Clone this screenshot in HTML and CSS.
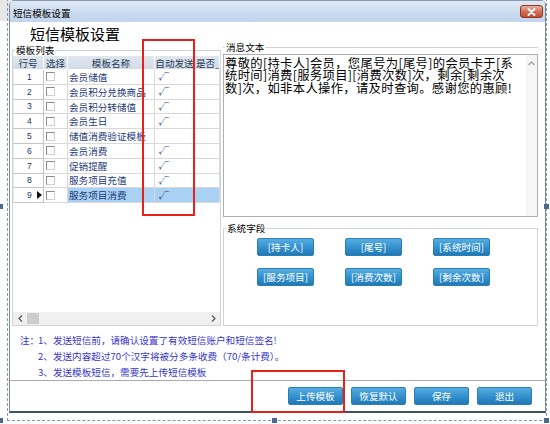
FILE: index.html
```html
<!DOCTYPE html>
<html lang="zh">
<head>
<meta charset="utf-8">
<title>短信模板设置</title>
<link rel="stylesheet" href="styles.css">
</head>
<body>
<div class="stage">
  <div class="gutter"><div class="gutter-top"></div></div>
  <div class="window">
    <div class="titlebar">
      <span class="title">短信模板设置</span>
      <div class="close">
        <svg width="9" height="8" viewBox="0 0 9 8"><path d="M1.5 1 L7.5 7 M7.5 1 L1.5 7" stroke="#fff" stroke-width="1.8" stroke-linecap="round"/></svg>
      </div>
    </div>
    <div class="client">
      <div class="big-title">短信模板设置</div>
      <div class="main">
        <div class="group list-group">
          <div class="legend"><span>模板列表</span></div>
          <div class="grid-wrap">
            <div class="grid">
              <div class="hcell">行号</div>
              <div class="hcell">选择</div>
              <div class="hcell">模板名称</div>
              <div class="hcell">自动发送</div>
              <div class="hcell clip">是否_</div>

              <div class="cell num">1</div><div class="cell chk"><i class="box"></i></div><div class="cell name">会员储值</div><div class="cell auto">√</div><div class="cell"></div>
              <div class="cell num">2</div><div class="cell chk"><i class="box"></i></div><div class="cell name">会员积分兑换商品</div><div class="cell auto">√</div><div class="cell"></div>
              <div class="cell num">3</div><div class="cell chk"><i class="box"></i></div><div class="cell name">会员积分转储值</div><div class="cell auto">√</div><div class="cell"></div>
              <div class="cell num">4</div><div class="cell chk"><i class="box"></i></div><div class="cell name">会员生日</div><div class="cell auto">√</div><div class="cell"></div>
              <div class="cell num">5</div><div class="cell chk"><i class="box"></i></div><div class="cell name">储值消费验证模板</div><div class="cell auto"></div><div class="cell"></div>
              <div class="cell num">6</div><div class="cell chk"><i class="box"></i></div><div class="cell name">会员消费</div><div class="cell auto">√</div><div class="cell"></div>
              <div class="cell num">7</div><div class="cell chk"><i class="box"></i></div><div class="cell name">促销提醒</div><div class="cell auto">√</div><div class="cell"></div>
              <div class="cell num">8</div><div class="cell chk"><i class="box"></i></div><div class="cell name">服务项目充值</div><div class="cell auto">√</div><div class="cell"></div>
              <div class="cell num">9<i class="arrow"></i></div><div class="cell chk"><i class="box"></i></div><div class="cell name sel">服务项目消费</div><div class="cell auto sel">√</div><div class="cell sel"></div>
            </div>
            <div class="hscroll">
              <span class="sarrow">
                <svg width="5" height="7" viewBox="0 0 5 7"><path d="M4 0.5 L1 3.5 L4 6.5" fill="none" stroke="#555" stroke-width="1.2"/></svg>
              </span>
              <span class="thumb"></span>
              <span class="sarrow right">
                <svg width="5" height="7" viewBox="0 0 5 7"><path d="M1 0.5 L4 3.5 L1 6.5" fill="none" stroke="#555" stroke-width="1.2"/></svg>
              </span>
            </div>
          </div>
        </div>
        <div class="right-col">
          <div class="group msg-group">
            <div class="legend"><span>消息文本</span></div>
            <div class="textarea">
              <div class="msg-text">尊敬的[持卡人]会员，您尾号为[尾号]的会员卡于[系<br>统时间]消费[服务项目][消费次数]次，剩余[剩余次<br>数]次，如非本人操作，请及时查询。感谢您的惠顾!</div>
              <div class="vscroll">
                <svg width="7" height="5" viewBox="0 0 7 5"><path d="M0.5 4 L3.5 1 L6.5 4" fill="none" stroke="#9a9a9a" stroke-width="1.1"/></svg>
              </div>
            </div>
          </div>
          <div class="group field-group">
            <div class="legend"><span>系统字段</span></div>
            <div class="field-buttons">
              <div class="btn">[持卡人]</div>
              <div class="btn">[尾号]</div>
              <div class="btn">[系统时间]</div>
              <div class="btn">[服务项目]</div>
              <div class="btn">[消费次数]</div>
              <div class="btn">[剩余次数]</div>
            </div>
          </div>
        </div>
      </div>
      <div class="notes">
        <div class="note-line"><span class="note-head">注：</span>1、发送短信前，请确认设置了有效短信账户和短信签名!</div>
        <div class="note-line indent">2、发送内容超过70个汉字将被分多条收费（70/条计费）。</div>
        <div class="note-line indent">3、发送模板短信，需要先上传短信模板</div>
      </div>
      <div class="bottom-bar">
        <div class="btn wide">上传模板</div>
        <div class="btn wide">恢复默认</div>
        <div class="btn wide">保存</div>
        <div class="btn wide">退出</div>
      </div>
    </div>
  </div>
  <div class="sel-frame"></div>
  <div class="handle h-ml"></div>
  <div class="handle h-mr"></div>
  <div class="handle h-bl"></div>
  <div class="handle h-bm"></div>
  <div class="handle h-br"></div>
  <div class="red-box red1"></div>
  <div class="red-box red2"></div>
</div>
</body>
</html>
```

FILE: styles.css
```css
html, body {
  margin: 0;
  padding: 0;
}
body {
  width: 550px;
  height: 424px;
  overflow: hidden;
  background: #fff;
  font-family: "Noto Sans CJK SC", "Noto Sans", sans-serif;
  font-size: 9.6px;
  color: #000;
}
.stage {
  position: relative;
  display: flex;
  width: 550px;
  height: 424px;
}
.gutter {
  width: 9px;
  flex: none;
}
.gutter-top {
  height: 21px;
  background: #e7e7e7;
}
.window {
  width: 537px;
  height: 413px;
  flex: none;
  box-sizing: border-box;
  border-left: 1px solid #7b8b9b;
  border-right: 1px solid #7b8b9b;
  border-bottom: 2px solid #3b5366;
  border-radius: 5px 5px 0 0;
  display: flex;
  flex-direction: column;
  overflow: hidden;
}
.titlebar {
  height: 22px;
  flex: none;
  box-sizing: border-box;
  border-top: 1px solid #8a9bb0;
  background: linear-gradient(#dfe9f5, #c9daee 60%, #c2d5ec);
  display: flex;
  align-items: center;
  padding-left: 3px;
}
.title {
  font-size: 9.6px;
  line-height: 12px;
  margin-top: 2px;
}
.close {
  margin-left: auto;
  margin-right: 2px;
  width: 23px;
  height: 13px;
  box-sizing: border-box;
  border: 1px solid #8f3b2b;
  border-radius: 3px;
  background: linear-gradient(#eab0a0, #d6705a 50%, #c34b33);
  display: flex;
  align-items: center;
  justify-content: center;
}
.client {
  flex: 1;
  background: #fff;
  display: flex;
  flex-direction: column;
}
.big-title {
  height: 22px;
  flex: none;
  box-sizing: border-box;
  padding: 2px 0 0 20px;
  font-size: 15px;
  line-height: 20px;
}
.main {
  height: 282px;
  flex: none;
  display: flex;
  padding-left: 2px;
}
.group {
  box-sizing: border-box;
  border: 1px solid #cdd4da;
}
.legend {
  margin-top: -7px;
  height: 12px;
  line-height: 12px;
  padding-left: 2px;
}
.legend span {
  background: #fff;
  padding: 0 1px;
}
.list-group {
  width: 209px;
  height: 276px;
  margin-top: 6px;
  display: flex;
  flex-direction: column;
}
.grid-wrap {
  flex: 1;
  display: flex;
  flex-direction: column;
}
.grid {
  display: grid;
  grid-template-columns: 31px 24px 87px 40px 25px;
  grid-template-rows: 14px repeat(9, 14.8px);
}
.hcell {
  box-sizing: border-box;
  background: linear-gradient(#e0e7ef, #d2dbe6);
  border-right: 1px solid #fff;
  border-bottom: 1px solid #fff;
  color: #243a58;
  display: flex;
  align-items: center;
  justify-content: center;
  white-space: nowrap;
  overflow: hidden;
}
.hcell.clip {
  justify-content: flex-start;
  padding-left: 1px;
}
.cell {
  box-sizing: border-box;
  border-right: 1px solid #d9d9d9;
  border-bottom: 1px solid #d9d9d9;
  display: flex;
  align-items: center;
  white-space: nowrap;
  overflow: hidden;
}
.cell.num {
  border: 1px solid #c4c4c4;
  border-top: none;
  border-left-color: #e6e6e6;
  font-family: "Liberation Sans", sans-serif;
  font-size: 8.5px;
  color: #1c3766;
  padding-left: 13px;
}
.arrow {
  margin-left: auto;
  margin-right: 1px;
  width: 0;
  height: 0;
  border-top: 4px solid transparent;
  border-bottom: 4px solid transparent;
  border-left: 5px solid #111;
}
.cell.chk {
  padding-left: 2px;
}
.box {
  width: 9px;
  height: 9px;
  box-sizing: border-box;
  border: 1px solid #8c8c8c;
  border-right-color: #d0d0d0;
  border-bottom-color: #d0d0d0;
  background: #fff;
}
.cell.name {
  color: #1d3b78;
  padding-left: 1px;
}
.cell.auto {
  color: #24427a;
  font-style: italic;
  padding-left: 3px;
  font-size: 9px;
}
.cell.sel {
  background: #a9d1f3;
}
.hscroll {
  margin-top: auto;
  height: 13px;
  background: #f0f0f0;
  display: flex;
  align-items: center;
}
.sarrow {
  width: 14px;
  height: 13px;
  display: flex;
  align-items: center;
  justify-content: center;
}
.sarrow.right {
  margin-left: auto;
}
.thumb {
  width: 12px;
  height: 11px;
  background: #cdcdcd;
}
.right-col {
  width: 315px;
  margin-left: 2px;
  display: flex;
  flex-direction: column;
}
.msg-group {
  margin-top: 3px;
  border-bottom: none;
  border-left: none;
  border-right: none;
}
.textarea {
  margin-top: 1px;
  height: 163px;
  box-sizing: border-box;
  border: 1px solid #a9afb5;
  display: flex;
}
.msg-text {
  flex: 1;
  padding: 2px 0 0 1px;
  font-size: 12.3px;
  line-height: 12.4px;
  letter-spacing: 0.35px;
  white-space: nowrap;
  overflow: hidden;
}
.vscroll {
  width: 11px;
  background: #f6f6f6;
  display: flex;
  justify-content: center;
  padding-top: 6px;
  box-sizing: border-box;
}
.field-group {
  margin-top: 11px;
  height: 98px;
}
.field-buttons {
  display: grid;
  grid-template-columns: repeat(3, 57px);
  grid-auto-rows: 18px;
  column-gap: 31px;
  row-gap: 12px;
  padding: 4px 0 0 33px;
}
.btn {
  box-sizing: border-box;
  border: 1px solid #2b7fb7;
  border-radius: 2px;
  background: linear-gradient(#56ade0, #3592ce 50%, #1f79b6);
  color: #fff;
  display: flex;
  align-items: center;
  justify-content: center;
  white-space: nowrap;
}
.notes {
  height: 54px;
  flex: none;
  box-sizing: border-box;
  padding: 6px 0 0 10px;
  color: #3636cc;
  line-height: 16px;
}
.note-line {
  white-space: nowrap;
}
.note-line.indent {
  padding-left: 18px;
}
.note-head {
  display: inline-block;
  width: 18px;
}
.bottom-bar {
  flex: 1;
  border-top: 1px solid #a8acb0;
  display: flex;
  justify-content: flex-end;
  align-items: flex-start;
  gap: 8px;
  padding: 6px 13px 0 0;
}
.btn.wide {
  width: 55px;
  height: 18px;
}
.sel-frame {
  position: absolute;
  left: 7px;
  top: -2px;
  width: 540px;
  height: 423px;
  box-sizing: border-box;
  border: 1px dashed #8298b3;
  pointer-events: none;
}
.handle {
  position: absolute;
  width: 5px;
  height: 5px;
  background: #4a6890;
}
.h-ml { left: -2px; top: 204px; }
.h-mr { left: 544px; top: 204px; }
.h-bl { left: -2px; top: 418px; }
.h-bm { left: 272px; top: 418px; }
.h-br { left: 544px; top: 418px; }
.red-box {
  position: absolute;
  box-sizing: border-box;
  border: 2px solid #e62117;
}
.red1 { left: 142px; top: 39px; width: 53px; height: 177px; }
.red2 { left: 251px; top: 370px; width: 94px; height: 43px; }
```
